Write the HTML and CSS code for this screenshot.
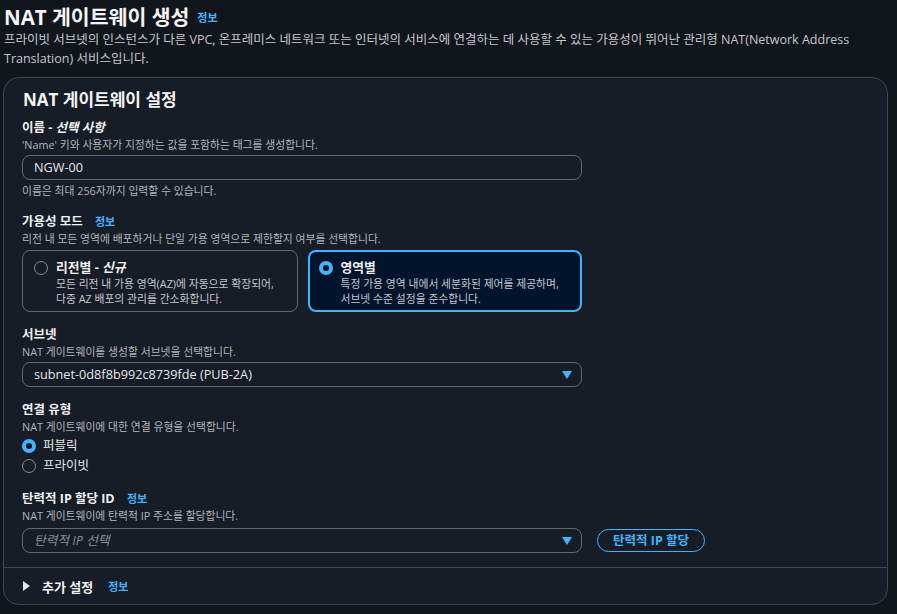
FILE: index.html
```html
<!DOCTYPE html>
<html lang="ko">
<head>
<meta charset="utf-8">
<link rel="stylesheet" href="styles.css">
</head>
<body>
<div class="page">
  <header class="page-head">
    <h1 class="title">NAT 게이트웨이 생성 <a class="info info-lg">정보</a></h1>
    <p class="lead">프라이빗 서브넷의 인스턴스가 다른 VPC, 온프레미스 네트워크 또는 인터넷의 서비스에 연결하는 데 사용할 수 있는 가용성이 뛰어난 관리형 NAT(Network Address Translation) 서비스입니다.</p>
  </header>

  <section class="card">
    <div class="card-body">
      <h2 class="card-title">NAT 게이트웨이 설정</h2>

      <div class="field field-name">
        <div class="label">이름 - <i>선택 사항</i></div>
        <div class="desc">'Name' 키와 사용자가 지정하는 값을 포함하는 태그를 생성합니다.</div>
        <div class="input">NGW-00</div>
        <div class="hint">이름은 최대 256자까지 입력할 수 있습니다.</div>
      </div>

      <div class="field field-mode">
        <div class="label">가용성 모드 <a class="info">정보</a></div>
        <div class="desc">리전 내 모든 영역에 배포하거나 단일 가용 영역으로 제한할지 여부를 선택합니다.</div>
        <div class="tiles">
          <div class="tile">
            <span class="radio"></span>
            <div class="tile-text">
              <div class="tile-title">리전별 - <i>신규</i></div>
              <div class="tile-desc">모든 리전 내 가용 영역(AZ)에 자동으로 확장되어,<br>다중 AZ 배포의 관리를 간소화합니다.</div>
            </div>
          </div>
          <div class="tile tile-on">
            <span class="radio radio-on"></span>
            <div class="tile-text">
              <div class="tile-title">영역별</div>
              <div class="tile-desc">특정 가용 영역 내에서 세분화된 제어를 제공하며,<br>서브넷 수준 설정을 준수합니다.</div>
            </div>
          </div>
        </div>
      </div>

      <div class="field field-subnet">
        <div class="label">서브넷</div>
        <div class="desc">NAT 게이트웨이를 생성할 서브넷을 선택합니다.</div>
        <div class="input select"><span>subnet-0d8f8b992c8739fde (PUB-2A)</span><span class="caret"></span></div>
      </div>

      <div class="field field-conn">
        <div class="label">연결 유형</div>
        <div class="desc">NAT 게이트웨이에 대한 연결 유형을 선택합니다.</div>
        <div class="radios">
          <div class="radio-row"><span class="radio radio-on"></span>퍼블릭</div>
          <div class="radio-row"><span class="radio"></span>프라이빗</div>
        </div>
      </div>

      <div class="field field-last">
        <div class="label">탄력적 IP 할당 ID <a class="info">정보</a></div>
        <div class="desc">NAT 게이트웨이에 탄력적 IP 주소를 할당합니다.</div>
        <div class="eip-row">
          <div class="input select"><span class="placeholder">탄력적 IP 선택</span><span class="caret"></span></div>
          <button class="btn">탄력적 IP 할당</button>
        </div>
      </div>
    </div>
    <div class="card-foot">
      <span class="tri"></span><span class="foot-title">추가 설정</span><a class="info">정보</a>
    </div>
  </section>
</div>
</body>
</html>
```

FILE: styles.css
```css
* { box-sizing: border-box; margin: 0; padding: 0; }
html, body { background: #11161d; }
body {
  font-family: "Open Sans", "Noto Sans CJK KR", sans-serif;
  color: #dedee3;
  width: 897px;
  height: 614px;
  overflow: hidden;
}
.page { padding: 4px 10px 0 3px; }
.page-head { padding-left: 1px; }
.title {
  font-size: 20.5px;
  font-weight: 700;
  line-height: 26px;
  color: #f5f5f7;
  display: flex;
  align-items: center;
  gap: 8px;
}
.info {
  color: #42b4ff;
  font-size: 11px;
  font-weight: 700;
  text-decoration: none;
  margin-left: 9px;
}
.title .info { margin-left: 0; position: relative; top: 1px; }
.lead {
  font-size: 12.5px;
  line-height: 19px;
  color: #c6c6cd;
  padding-right: 20px;
}
.card {
  margin-top: 9px;
  background: #161d26;
  border: 1px solid #424650;
  border-radius: 16px;
  width: 885px;
}
.card-body { padding: 10px 19px 14px 18px; }
.card-title {
  font-size: 17px;
  font-weight: 700;
  line-height: 24px;
  color: #f5f5f7;
  margin-bottom: 7px;
  padding-left: 1px;
}
.field { margin-bottom: 14px; }
.field-name { margin-bottom: 15px; }
.field-mode { margin-bottom: 14px; }
.field-conn { margin-bottom: 14px; }
.field-last { margin-bottom: 0; }
.label {
  font-size: 12.5px;
  font-weight: 700;
  line-height: 18px;
  color: #f0f0f3;
}
.label i { font-style: italic; }
.desc, .hint {
  font-size: 10.8px;
  line-height: 15px;
  color: #b4b4bb;
}
.hint { margin-top: 3px; }
.input {
  margin-top: 3px;
  width: 560px;
  height: 25px;
  border: 1px solid #656871;
  border-radius: 8px;
  background: #161d26;
  font-size: 12.7px;
  line-height: 23px;
  padding: 0 11px;
  color: #e6e6ea;
}
.select {
  display: flex;
  align-items: center;
  justify-content: space-between;
  padding-right: 9px;
}
.placeholder { font-style: italic; color: #8c8c94; }
.caret {
  width: 0; height: 0;
  border-left: 5px solid transparent;
  border-right: 5px solid transparent;
  border-top: 8px solid #42b4ff;
}
.tiles {
  display: flex;
  gap: 10px;
  margin-top: 4px;
  width: 560px;
}
.tile {
  flex: 1;
  height: 62px;
  border: 1px solid #656871;
  border-radius: 8px;
  display: flex;
  align-items: flex-start;
  padding: 8px 10px 0 11px;
  gap: 8px;
}
.tile-on {
  border: 2px solid #42b4ff;
  background: #00142b;
  padding: 7px 9px 0 9px;
}
.radio {
  width: 14px; height: 14px;
  border-radius: 50%;
  border: 1.5px solid #8c8c94;
  flex: none;
  margin-top: 2px;
}
.radio-on {
  border: 4px solid #42b4ff;
  background: #0f141a;
}
.tile-title {
  font-size: 12.8px;
  font-weight: 700;
  line-height: 17px;
  color: #f0f0f3;
}
.tile-title i { font-style: italic; }
.tile-desc {
  font-size: 10.8px;
  line-height: 15px;
  color: #c6c6cd;
}
.radios { margin-top: 2px; }
.radio-row {
  display: flex;
  align-items: center;
  gap: 7px;
  height: 20px;
  font-size: 12.5px;
  line-height: 20px;
  color: #e6e6ea;
}
.radio-row .radio { margin-top: 0; }
.eip-row { display: flex; align-items: center; gap: 15px; margin-top: 5px; }
.eip-row .input { margin-top: 0; }
.btn {
  font-family: "Open Sans", "Noto Sans CJK KR", sans-serif;
  height: 23px;
  padding: 0 15px;
  border: 1.5px solid #42b4ff;
  border-radius: 12px;
  background: transparent;
  color: #42b4ff;
  font-size: 12.5px;
  font-weight: 700;
  line-height: 20px;
}
.card-foot {
  border-top: 1px solid #424650;
  height: 37px;
  display: flex;
  align-items: center;
  padding-left: 19px;
}
.tri {
  width: 0; height: 0;
  border-top: 5px solid transparent;
  border-bottom: 5px solid transparent;
  border-left: 7px solid #e6e6ea;
  margin-right: 12px;
}
.foot-title {
  font-size: 13px;
  font-weight: 700;
  color: #f0f0f3;
}
.card-foot .info { margin-left: 15px; }
```
